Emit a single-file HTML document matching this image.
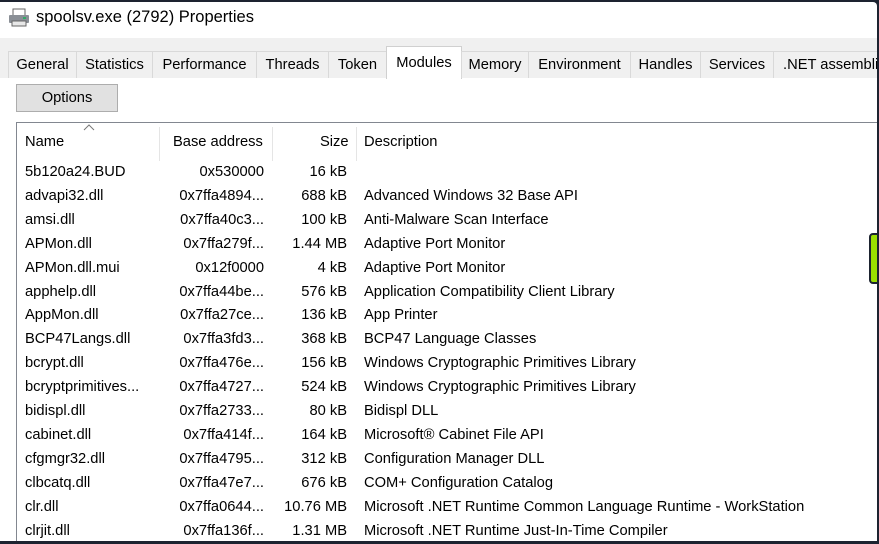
<!DOCTYPE html>
<html><head><style>
body{margin:0;width:879px;height:544px;background:#1d2330;overflow:hidden;font-family:"Liberation Sans",sans-serif;font-size:14.7px;color:#000}
#win{position:absolute;left:0;top:2px;width:877px;height:539px;background:#fff;overflow:hidden;border-radius:0 4px 0 0}
#title{position:absolute;left:36px;top:6px;font-size:16.5px}
#strip{position:absolute;left:0;top:36px;width:877px;height:40px;background:#f0f0f0}
.tab{position:absolute;top:49px;height:27px;background:#f0f0f0;border:1px solid #d9d9d9;border-bottom:none;box-sizing:border-box;text-align:center;line-height:27px;white-space:nowrap;overflow:hidden}
.sel{top:44px;height:33px;background:#fff;border-color:#d0d0d0;line-height:32px}
#opt{position:absolute;left:16px;top:82px;width:102px;height:28px;background:#e1e1e1;border:1px solid #adadad;box-sizing:border-box;text-align:center;line-height:27px}
#list{position:absolute;left:16px;top:120px;width:870px;height:430px;border-top:1px solid #828790;border-left:1px solid #828790}
.h{position:absolute;top:132px}
.d{position:absolute;top:125px;width:1px;height:34px;background:#e5e5e5}
.r{position:absolute;left:0;height:24px;width:877px;white-space:nowrap}
.r span{position:absolute;top:0}
</style></head><body>
<div id="win">
<svg style="position:absolute;left:8px;top:6px" width="22" height="20" viewBox="0 0 22 20"><rect x="5" y="1" width="12" height="7" fill="#fff" stroke="#666"/><rect x="1" y="7" width="20" height="8" rx="1" fill="#8a8f96"/><rect x="4" y="13" width="14" height="5" fill="#e8e8e8" stroke="#666"/><rect x="15" y="9" width="3" height="2" fill="#3a6"/></svg>
<div id="title">spoolsv.exe (2792) Properties</div>
<div id="strip"></div>
<div class="tab" style="left:8px;width:69px">General</div>
<div class="tab" style="left:76px;width:77px">Statistics</div>
<div class="tab" style="left:152px;width:105px">Performance</div>
<div class="tab" style="left:256px;width:73px">Threads</div>
<div class="tab" style="left:328px;width:59px">Token</div>
<div class="tab sel" style="left:386px;width:76px">Modules</div>
<div class="tab" style="left:461px;width:68px">Memory</div>
<div class="tab" style="left:528px;width:103px">Environment</div>
<div class="tab" style="left:630px;width:71px">Handles</div>
<div class="tab" style="left:700px;width:74px">Services</div>
<div class="tab" style="left:773px;width:120px;text-align:left;padding-left:9px">.NET assemblies</div>
<div id="opt">Options</div>
<div id="list"></div>
<svg style="position:absolute;left:82px;top:121px" width="14" height="8"><path d="M2 7L7 2L12 7" fill="none" stroke="#777"/></svg>
<div class="h" style="left:25px">Name</div>
<div class="d" style="left:159px"></div>
<div class="h" style="left:173px">Base address</div>
<div class="d" style="left:272px"></div>
<div class="h" style="left:320px">Size</div>
<div class="d" style="left:356px"></div>
<div class="h" style="left:364px">Description</div>
<div id="rows"></div>
<div style="position:absolute;left:869px;top:231px;width:12px;height:51px;background:#9be000;border:2px solid #1d2330;border-radius:4px;box-sizing:border-box"></div>
</div>
<script>
var d=[["5b120a24.BUD","0x530000","16 kB",""],["advapi32.dll","0x7ffa4894...","688 kB","Advanced Windows 32 Base API"],["amsi.dll","0x7ffa40c3...","100 kB","Anti-Malware Scan Interface"],["APMon.dll","0x7ffa279f...","1.44 MB","Adaptive Port Monitor"],["APMon.dll.mui","0x12f0000","4 kB","Adaptive Port Monitor"],["apphelp.dll","0x7ffa44be...","576 kB","Application Compatibility Client Library"],["AppMon.dll","0x7ffa27ce...","136 kB","App Printer"],["BCP47Langs.dll","0x7ffa3fd3...","368 kB","BCP47 Language Classes"],["bcrypt.dll","0x7ffa476e...","156 kB","Windows Cryptographic Primitives Library"],["bcryptprimitives...","0x7ffa4727...","524 kB","Windows Cryptographic Primitives Library"],["bidispl.dll","0x7ffa2733...","80 kB","Bidispl DLL"],["cabinet.dll","0x7ffa414f...","164 kB","Microsoft® Cabinet File API"],["cfgmgr32.dll","0x7ffa4795...","312 kB","Configuration Manager DLL"],["clbcatq.dll","0x7ffa47e7...","676 kB","COM+ Configuration Catalog"],["clr.dll","0x7ffa0644...","10.76 MB","Microsoft .NET Runtime Common Language Runtime - WorkStation"],["clrjit.dll","0x7ffa136f...","1.31 MB","Microsoft .NET Runtime Just-In-Time Compiler"]];
var h="";d.forEach(function(r,i){var y=162+i*23.9;h+='<div class="r" style="top:'+y+'px"><span style="left:25px">'+r[0]+'</span><span style="right:613px">'+r[1]+'</span><span style="right:530px">'+r[2]+'</span><span style="left:364px">'+r[3]+'</span></div>';});
document.getElementById("rows").innerHTML=h;
</script>
</body></html>
